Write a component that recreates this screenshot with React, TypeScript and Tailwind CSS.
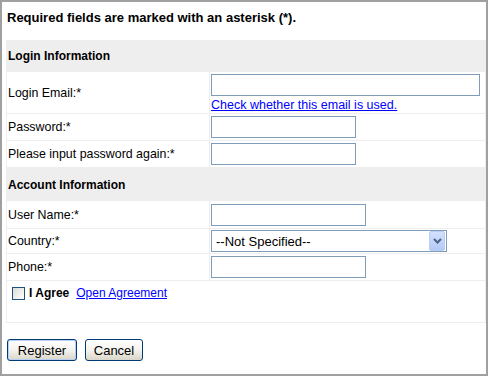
import React from "react";

const inputCls = "block h-[22px] border border-[#7f9db9] bg-white";

function Label({ children }: { children: React.ReactNode }) {
  return <div className="flex items-center bg-white pl-px text-[12.4px] leading-[14px]">{children}</div>;
}

export default function App() {
  return (
    <div className="w-[488px] h-[376px] border-2 border-[#a0a0a0] bg-white font-['Liberation_Sans',Arial,sans-serif] text-[12px] text-black">
      <div className="h-[38px] pl-[5px] pt-[8px] text-[13px] font-bold leading-[15px]">
        Required fields are marked with an asterisk (*).
      </div>
      <div className="ml-[4px] w-[480px] bg-[#eeeeee] flex flex-col gap-px pb-px">
        <div className="h-[31px] flex items-center pl-[2px] font-bold leading-[14px]">Login Information</div>
        <div className="h-[41px] grid grid-cols-[202px_275px] gap-x-px pl-px">
          <Label>Login Email:*</Label>
          <div className="bg-white pl-px pt-[2px] flex flex-col items-start">
            <input className={inputCls + " w-[269px]"} />
            <a href="#" className="mt-[2px] text-[12.5px] leading-[14px] text-[#0000ff] underline">Check whether this email is used.</a>
          </div>
        </div>
        <div className="h-[26px] grid grid-cols-[202px_275px] gap-x-px pl-px">
          <Label>Password:*</Label>
          <div className="bg-white pl-px pt-[2px]">
            <input type="password" className={inputCls + " w-[145px]"} />
          </div>
        </div>
        <div className="h-[26px] grid grid-cols-[202px_275px] gap-x-px pl-px">
          <Label>Please input password again:*</Label>
          <div className="bg-white pl-px pt-[2px]">
            <input type="password" className={inputCls + " w-[145px]"} />
          </div>
        </div>
        <div className="h-[32px] flex items-center pl-[2px] pt-[2px] font-bold leading-[14px]">Account Information</div>
        <div className="h-[27px] grid grid-cols-[202px_275px] gap-x-px pl-px">
          <Label>User Name:*</Label>
          <div className="bg-white pl-px pt-[3px]">
            <input className={inputCls + " w-[155px]"} />
          </div>
        </div>
        <div className="h-[24px] grid grid-cols-[202px_275px] gap-x-px pl-px">
          <Label>Country:*</Label>
          <div className="bg-white pl-px pt-px">
            <div className="w-[236px] h-[22px] border border-[#7f9db9] bg-white flex items-center justify-between">
              <span className="pl-[4px] text-[13px] leading-[15px]">--Not Specified--</span>
              <span className="mr-px w-[16px] h-[20px] rounded-[2px] border border-[#bccdf3] bg-linear-to-b from-[#d3e1fd] to-[#b3c9f7] flex items-center justify-center">
                <svg width="9" height="6" viewBox="0 0 9 6">
                  <polyline points="1,1 4.5,4.5 8,1" fill="none" stroke="#4d6185" strokeWidth="2" />
                </svg>
              </span>
            </div>
          </div>
        </div>
        <div className="h-[26px] grid grid-cols-[202px_275px] gap-x-px pl-px">
          <Label>Phone:*</Label>
          <div className="bg-white pl-px pt-[2px]">
            <input className={inputCls + " w-[155px]"} />
          </div>
        </div>
        <div className="h-[41px] ml-px mr-px bg-white pl-[5px] pt-[5px]">
          <div className="flex items-center h-[14px]">
            <span className="w-[13px] h-[13px] border border-[#1c5180] bg-linear-to-br from-[#dcdcd7] to-white" />
            <span className="ml-[4px] font-bold leading-[14px]">I Agree</span>
            <a href="#" className="ml-[7px] leading-[14px] text-[#0000ff] underline">Open Agreement</a>
          </div>
        </div>
      </div>
      <div className="mt-[16px] ml-[5px] flex gap-[8px]">
        <button className="w-[70px] h-[22px] rounded-[3px] border border-[#003c74] bg-linear-to-b from-white via-[#f4f3ee] to-[#d9d5c9] shadow-[inset_0_0_0_1px_#b9cdf5] text-[13px] leading-[15px]">
          Register
        </button>
        <button className="w-[58px] h-[22px] rounded-[3px] border border-[#003c74] bg-linear-to-b from-white via-[#f4f3ee] to-[#d9d5c9] text-[13px] leading-[15px]">
          Cancel
        </button>
      </div>
    </div>
  );
}
